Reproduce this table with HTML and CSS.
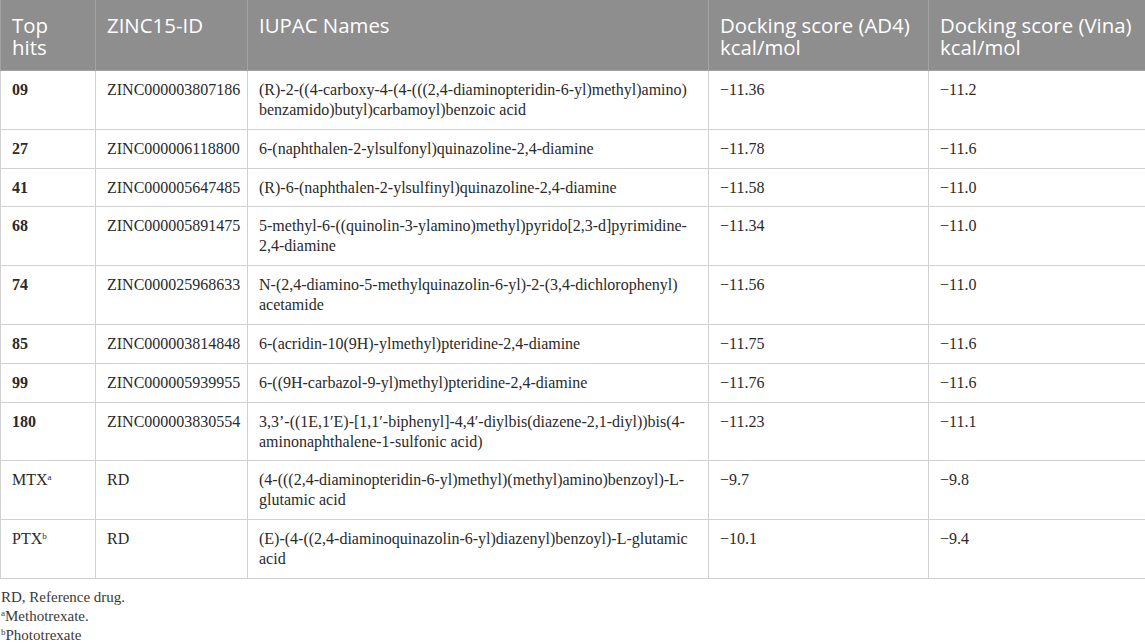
FILE: index.html
```html
<!DOCTYPE html>
<html lang="en">
<head>
<meta charset="utf-8">
<title>Docking results</title>
<link rel="stylesheet" href="styles.css">
</head>
<body>
<table class="data">
  <colgroup>
    <col class="c1"><col class="c2"><col class="c3"><col class="c4"><col class="c5">
  </colgroup>
  <thead>
    <tr>
      <th class="first">Top hits</th>
      <th>ZINC15-ID</th>
      <th>IUPAC Names</th>
      <th>Docking score (AD4) kcal/mol</th>
      <th>Docking score (Vina) kcal/mol</th>
    </tr>
  </thead>
  <tbody>
    <tr><td class="hit">09</td><td>ZINC000003807186</td><td>(R)-2-((4-carboxy-4-(4-(((2,4-diaminopteridin-6-yl)methyl)amino)<br>benzamido)butyl)carbamoyl)benzoic acid</td><td>−11.36</td><td>−11.2</td></tr>
    <tr><td class="hit">27</td><td>ZINC000006118800</td><td>6-(naphthalen-2-ylsulfonyl)quinazoline-2,4-diamine</td><td>−11.78</td><td>−11.6</td></tr>
    <tr><td class="hit">41</td><td>ZINC000005647485</td><td>(R)-6-(naphthalen-2-ylsulfinyl)quinazoline-2,4-diamine</td><td>−11.58</td><td>−11.0</td></tr>
    <tr><td class="hit">68</td><td>ZINC000005891475</td><td>5-methyl-6-((quinolin-3-ylamino)methyl)pyrido[2,3-d]pyrimidine-<br>2,4-diamine</td><td>−11.34</td><td>−11.0</td></tr>
    <tr><td class="hit">74</td><td>ZINC000025968633</td><td>N-(2,4-diamino-5-methylquinazolin-6-yl)-2-(3,4-dichlorophenyl)<br>acetamide</td><td>−11.56</td><td>−11.0</td></tr>
    <tr><td class="hit">85</td><td>ZINC000003814848</td><td>6-(acridin-10(9H)-ylmethyl)pteridine-2,4-diamine</td><td>−11.75</td><td>−11.6</td></tr>
    <tr><td class="hit">99</td><td>ZINC000005939955</td><td>6-((9H-carbazol-9-yl)methyl)pteridine-2,4-diamine</td><td>−11.76</td><td>−11.6</td></tr>
    <tr><td class="hit">180</td><td>ZINC000003830554</td><td>3,3’-((1E,1′E)-[1,1′-biphenyl]-4,4′-diylbis(diazene-2,1-diyl))bis(4-<br>aminonaphthalene-1-sulfonic acid)</td><td>−11.23</td><td>−11.1</td></tr>
    <tr><td>MTX<sup>a</sup></td><td>RD</td><td>(4-(((2,4-diaminopteridin-6-yl)methyl)(methyl)amino)benzoyl)-L-<br>glutamic acid</td><td>−9.7</td><td>−9.8</td></tr>
    <tr><td>PTX<sup>b</sup></td><td>RD</td><td>(E)-(4-((2,4-diaminoquinazolin-6-yl)diazenyl)benzoyl)-L-glutamic<br>acid</td><td>−10.1</td><td>−9.4</td></tr>
  </tbody>
</table>
<div class="notes">
  <p>RD, Reference drug.</p>
  <p><sup>a</sup>Methotrexate.</p>
  <p><sup>b</sup>Phototrexate</p>
</div>
</body>
</html>
```

FILE: styles.css
```css
html, body {
  margin: 0;
  padding: 0;
  background: #ffffff;
}

.data {
  width: 1145px;
  border-collapse: collapse;
  table-layout: fixed;
  font-family: "Liberation Serif", "Times New Roman", serif;
  font-size: 16px;
  line-height: 20px;
  color: #2a2a2a;
}

.c1 { width: 95px; }
.c2 { width: 152px; }
.c3 { width: 461px; }
.c4 { width: 220px; }
.c5 { width: 217px; }

.data th {
  background: #8e8e8e;
  color: #ffffff;
  font-family: "Open Sans", "Noto Sans", sans-serif;
  font-weight: 400;
  font-size: 20.4px;
  line-height: 22px;
  text-align: left;
  vertical-align: top;
  padding: 14px 3px 12px 11px;
  border: 1px solid #a3a3a3;
  border-top: none;
}

.data th.first {
  padding-right: 24px;
}

.data td {
  vertical-align: top;
  padding: 9px 10px 8.8px 11px;
  border: 1px solid #d0d0d0;
}

.data td.hit {
  font-weight: 700;
}

.data sup {
  font-size: 9px;
  line-height: 0;
  vertical-align: 5px;
}

.notes {
  padding-top: 9px;
  font-family: "Liberation Serif", "Times New Roman", serif;
  font-size: 15px;
  line-height: 19px;
  color: #3a3a3a;
}

.notes p {
  margin: 0 0 0 1px;
}

.notes sup {
  font-size: 9px;
  line-height: 0;
  vertical-align: 5px;
}
```
